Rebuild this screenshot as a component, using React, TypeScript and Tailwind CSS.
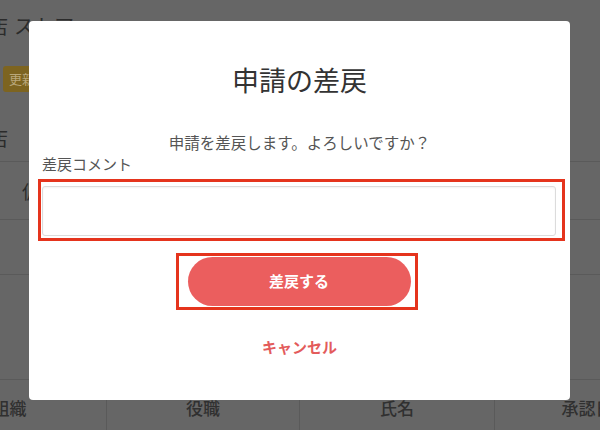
import React from "react";

export default function App() {
  const font = { fontFamily: '"Noto Sans CJK JP", "Noto Sans", sans-serif' };
  return (
    <div className="relative w-[600px] h-[430px] overflow-hidden bg-[#666666]" style={font}>
      {/* background page (dimmed) */}
      <div className="flex flex-col text-[#2b2b2b]">
        <div className="flex h-[50px] items-center gap-[6px] pt-[2px]">
          <span className="ml-[-12px] text-[20px] leading-none">店</span>
          <span className="text-[20px] leading-none">ストア</span>
        </div>
        <div className="flex h-[62px] items-center pl-[3px] pb-[4px]">
          <div className="flex h-[26px] w-[40px] items-center rounded-[3px] bg-[#7d6420] pl-[6px] text-[13px] text-[#b9a77a]">
            更新
          </div>
        </div>
        <div className="flex h-[50px] items-center border-b border-[#5a5a5a] pt-[2px]">
          <span className="ml-[-12px] text-[20px] leading-none">店</span>
        </div>
        <div className="flex h-[58px] items-center border-b border-[#5a5a5a] pl-[22px]">
          <span className="text-[18px] leading-none">仮</span>
        </div>
        <div className="h-[55px] border-b border-[#5a5a5a]" />
        <div className="h-[105px] border-b border-[#5a5a5a]" />
        <div className="ml-[-87px] flex h-[50px] pt-[6px] text-[17px] font-medium text-[#303030]">
          <div className="flex w-[194px] shrink-0 items-center justify-center border-r border-[#5a5a5a]">組織</div>
          <div className="flex w-[193px] shrink-0 items-center justify-center border-r border-[#5a5a5a]">役職</div>
          <div className="flex w-[195px] shrink-0 items-center justify-center border-r border-[#5a5a5a]">氏名</div>
          <div className="flex w-[194px] shrink-0 items-center justify-center pr-[10px]">承認日</div>
        </div>
      </div>

      {/* modal */}
      <div className="absolute left-[29px] top-[21px] flex h-[379px] w-[541px] flex-col items-center rounded-[4px] bg-white px-[9px] pt-[41px]">
        <div className="text-[27px] leading-[36px] text-[#333333]">申請の差戻</div>
        <div className="mt-[33px] text-[15.5px] leading-[22px] text-[#555555]">
          申請を差戻します。よろしいですか？
        </div>
        <div className="self-start pl-[4px] text-[15px] leading-[22px] text-[#555555]">差戻コメント</div>
        <div className="mt-[4px] w-[527px] self-start border-[3px] border-[#e5341d] pb-[2px] pl-[1px] pr-[6px] pt-[4px]">
          <div className="h-[50px] w-full rounded-[3px] border border-[#dcdcdc] bg-white shadow-[inset_0_1px_2px_rgba(0,0,0,0.05)]" />
        </div>
        <div className="mt-[12px] ml-[-6px] border-[3px] border-[#e5341d] pb-[1px] pl-[9px] pr-[4px] pt-[1px]">
          <div className="flex h-[49px] w-[223px] items-center justify-center rounded-full bg-[#eb5e5e] text-[15px] font-bold text-white">
            差戻する
          </div>
        </div>
        <div className="mt-[26px] text-[15px] font-bold leading-[22px] text-[#e35b5b]">キャンセル</div>
      </div>
    </div>
  );
}
